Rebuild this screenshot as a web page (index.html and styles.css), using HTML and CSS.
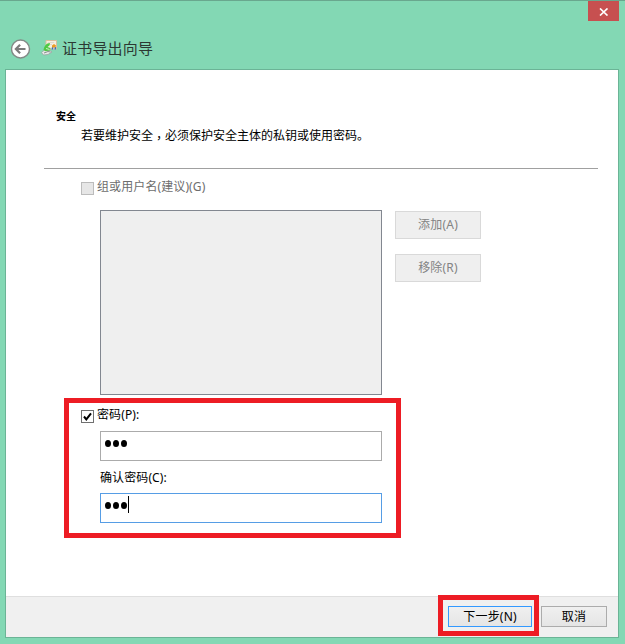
FILE: index.html
```
<!DOCTYPE html>
<html lang="zh-CN">
<head>
<meta charset="utf-8">
<title>证书导出向导</title>
<link rel="stylesheet" href="styles.css">
</head>
<body>
<div class="window">
  <div class="caption"><button class="close" aria-label="关闭"><svg width="10" height="8" viewBox="0 0 10 8"><path d="M1 .5L8.5 7.5M8.5 .5L1 7.5" stroke="#fff" stroke-width="1.7"/></svg></button></div>
  <header class="titlebar">
    <svg class="back" width="20" height="20" viewBox="0 0 20 20"><circle cx="9.500" cy="10" r="9" fill="#fff" stroke="#838a87" stroke-width="1.4"/><path d="M14.500 10H5.500M9.100 5.8L4.900 10l4.2 4.2" fill="none" stroke="#7b7b7b" stroke-width="2.2"/></svg>
    <svg class="cert" width="17" height="17" viewBox="0 0 17 17"><path d="M5 1.5h10.5v8.5h-10.500z" fill="#f4eee0" stroke="#d9bf9e"/><path d="M7 3.500h6M8 5.500h3" stroke="#ddd4c6" stroke-width=".8"/><path d="M11.700 8l-.4 2.500M14.300 8v2.500" stroke="#356ec4" stroke-width="1.500"/><path d="M11 6.500l2-1.500 2 1.500-.6 2H11z" fill="#ed9b22"/><path d="M.5 13.500l3-2.500 5.500 .5 2 1.500-4 2.500-4.500 .5z" fill="#e5e8e7" stroke="#9ba5a1" stroke-width=".8"/><path d="M3 14l4-1.500 2.500 .5" fill="none" stroke="#858f8b"/><path d="M2.500 11C3 7.500 4.500 5.700 6.500 4.500L9 4 8.500 6.500 6.500 8l3 1-.5 2.300-4.500 1z" fill="#4fc943"/><path d="M5 9.500l3.500 1" stroke="#d7f6cf" stroke-width=".9"/></svg>
    <h1>证书导出向导</h1>
  </header>
  <main class="panel">
    <section class="page">
      <h2>安全</h2>
      <p class="desc">若要维护安全<span class="comma" lang="zh-TW">，</span>必须保护安全主体的私钥或使用密码。</p>
      <div class="rule"></div>
      <div class="check muted"><span class="box"></span><span>组或用户名(建议)(G)</span></div>
      <div class="group">
        <div class="list"></div>
        <div class="side"><button disabled>添加(A)</button><button disabled>移除(R)</button></div>
      </div>
      <div class="secret">
        <div class="check"><span class="box"><svg width="11" height="11" viewBox="0 0 11 11"><path d="M2 5.5L4.300 8.300L9 2.300" fill="none" stroke="#000" stroke-width="2"/></svg></span><span>密码(P):</span></div>
        <div class="field"><i></i><i></i><i></i></div>
        <div class="label">确认密码(C):</div>
        <div class="field focus"><i></i><i></i><i></i><b></b></div>
        <div class="mark"></div>
      </div>
    </section>
    <footer>
      <div class="primary"><button class="next">下一步(N)</button><div class="mark"></div></div>
      <button class="cancel">取消</button>
    </footer>
  </main>
</div>
</body>
</html>
```
FILE: styles.css
```
* { box-sizing: border-box; }
body { margin: 0; font: 12px/18px "Noto Sans", "Noto Sans CJK SC", sans-serif; color: #000; letter-spacing: .1px; }
h1, h2, p { margin: 0; }
button { font: inherit; letter-spacing: .2px; margin: 0; padding: 0; }
svg { display: block; flex: none; }
.window { width: 625px; height: 644px; background: #83d8b4; border-top: 1px solid #69a78e; padding: 0 6px 6px 5px; display: flex; flex-direction: column; }
.caption { height: 20px; display: flex; justify-content: flex-end; }
.close { width: 31px; height: 20px; border: 0; background: #c75050; display: flex; align-items: center; justify-content: center; padding: 1px 0 0 1px; }
.titlebar { height: 48px; display: flex; align-items: center; padding: 7px 0 0 6px; }
.cert { margin: -3px 0 0 10px; }
h1 { font-size: 15px; line-height: 22px; font-weight: 400; color: #2c3833; margin: -1px 0 0 4px; letter-spacing: .2px; }
.panel { width: 614px; height: 569px; border: 1px solid #6bb496; background: #fff; display: flex; flex-direction: column; }
.page { height: 526px; padding: 37px 20px 0 38px; }
h2 { font-size: 10px; line-height: 18px; font-weight: 700; margin-left: 12px; letter-spacing: 0; }
.desc { margin: 2px 0 0 37px; line-height: 18px; letter-spacing: 0; }
.comma { font-family: "Noto Sans CJK TC", sans-serif; line-height: 1; position: relative; top: 3px; }
.rule { height: 1px; background: #a0a0a0; margin-top: 23px; }
.check { height: 18px; display: flex; margin-left: 37px; }
.box { width: 13px; height: 13px; border: 1px solid #707070; margin: 4px 3px 0 0; flex: none; }
.muted { color: #6d6d6d; margin-top: 9px; }
.muted .box { border-color: #bcbcbc; background: #e6e6e6; }
.group { display: flex; gap: 13px; margin: 14px 0 0 56px; }
.list { width: 282px; height: 185px; background: #efefef; border: 1px solid #828790; }
.side { display: flex; flex-direction: column; gap: 15px; padding-top: 1px; }
.side button { width: 86px; height: 28px; background: #efefef; border: 1px solid #d9d9d9; color: #838383; }
.secret { position: relative; padding-top: 11px; }
.field { width: 282px; height: 30px; margin: 7px 0 0 56px; border: 1px solid #ababab; display: flex; padding: 7px 0 0 4px; }
.field i { width: 6px; height: 7px; margin: 1px 2px 0 0; border-radius: 50%; background: #000; }
.field b { width: 1px; height: 17px; background: #000; margin: -5px 0 0 -1px; }
.focus { border-color: #569de5; }
.label { margin: 8px 0 0 56px; }
.secret .focus { margin-top: 6px; }
.mark { position: absolute; border: 5px solid #ed1c24; }
.secret .mark { left: 20px; top: 3px; width: 337px; height: 140px; }
footer { height: 41px; background: #f0f0f0; border-top: 1px solid #dfdfdf; display: flex; justify-content: flex-end; gap: 9px; padding: 9px 11px 0 0; }
footer button { height: 21px; border: 1px solid #acacac; background: linear-gradient(#f0f0f0, #e5e5e5); color: #000; line-height: 18px; display: block; }
.primary { position: relative; }
.primary .mark { left: -10px; top: -11px; width: 101px; height: 41px; }
.next { width: 84px; }
footer .next { border-color: #3399ff; }
.cancel { width: 66px; }
```
